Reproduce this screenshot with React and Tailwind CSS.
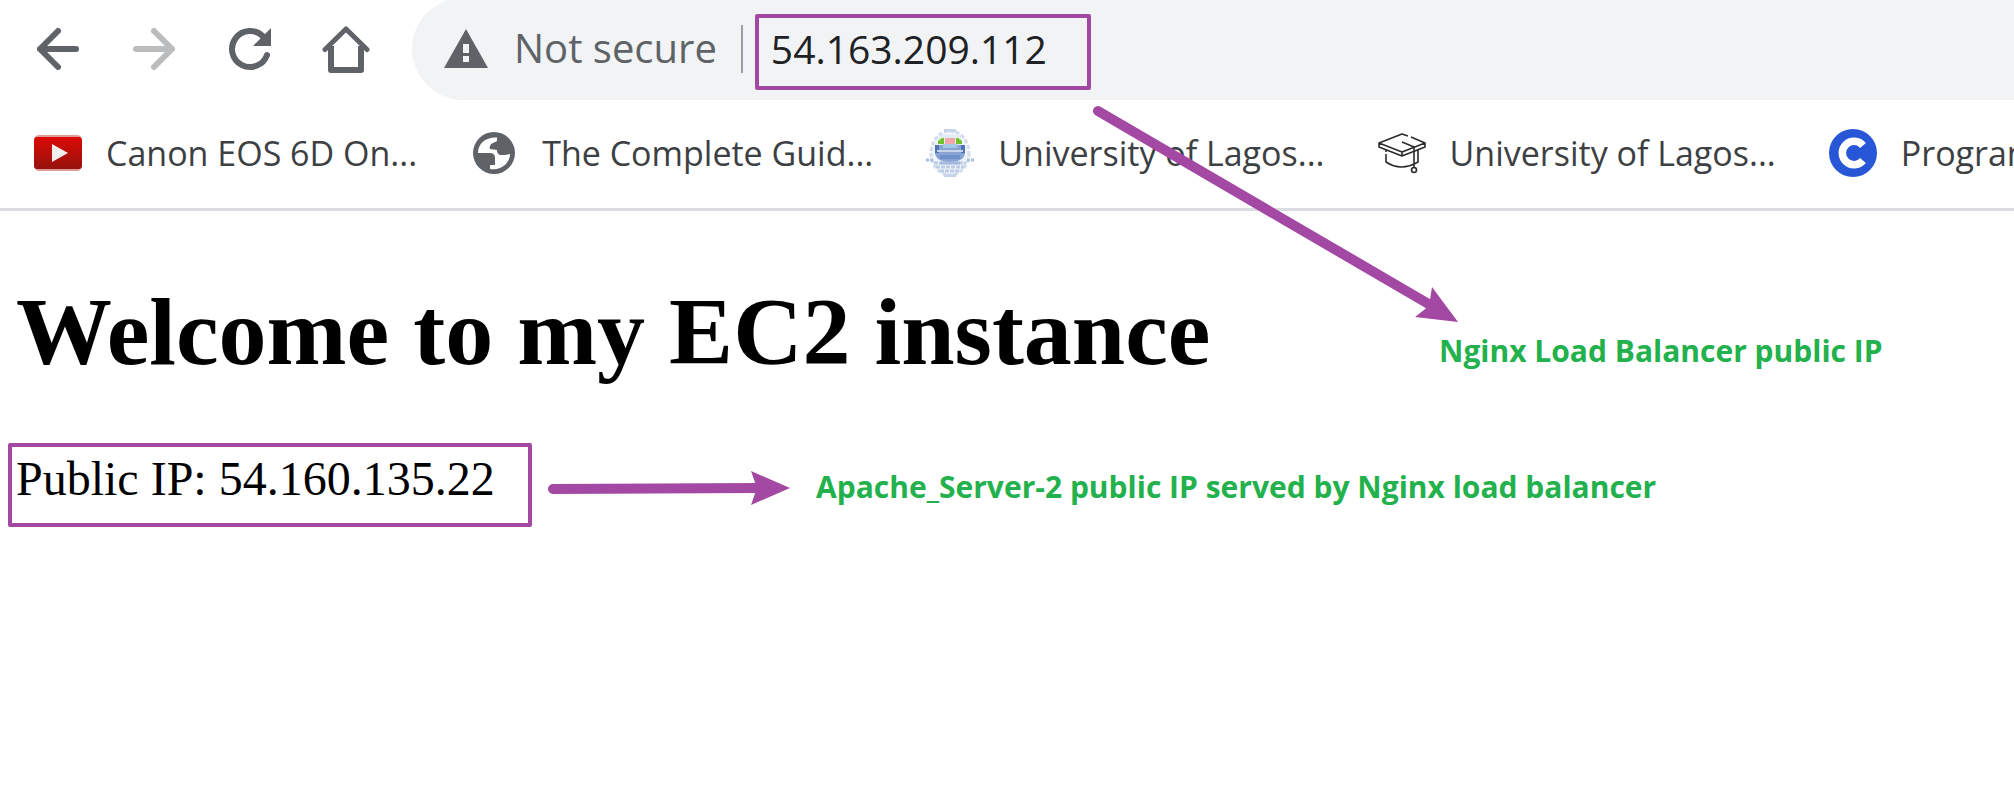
const purple = "#a349a4";

function IconButton({ label, disabled, children }) {
  return (
    <button
      type="button"
      aria-label={label}
      disabled={disabled}
      className="flex size-12 shrink-0 items-center justify-center"
    >
      <svg viewBox="0 0 48 48" className="size-12" aria-hidden="true">
        {children}
      </svg>
    </button>
  );
}

function Bookmark({ label, children }) {
  return (
    <a href="#" className="flex shrink-0 items-center gap-6 text-[#3c4043]">
      <svg viewBox="0 0 48 48" className="size-12 shrink-0" aria-hidden="true">
        {children}
      </svg>
      <span className="whitespace-nowrap">{label}</span>
    </a>
  );
}

function CrestIcon() {
  return (
    <>
      <ellipse cx="24" cy="24" rx="19" ry="22" fill="#f1f5fb" />
      <ellipse cx="24" cy="24" rx="19" ry="22" fill="none" stroke="#d3ddee" strokeWidth="3" strokeDasharray="4 2" />
      <path d="M0 31h7M41 31h7" stroke="#a9bfe0" strokeWidth="3" strokeDasharray="3 1" />
      <path d="M8 34h32M10 38h28M14 42h20" stroke="#bccbe6" strokeWidth="3" strokeDasharray="4 1" />
      <path d="M18 0h12v3H18zM18 45h12v3H18z" fill="#c6d3ea" />
      <path d="M12 10l4-4h16l4 4v6H12z" fill="#e2ecf3" />
      <path d="M12 15v-3l4-3h2v6zM36 15v-3l-4-3h-2v6z" fill="#6fc42c" />
      <path d="M19 9h10v6H19z" fill="#f4a7a9" />
      <path d="M9 16h30v9q-2 8-15 8T9 25z" fill="#89a4d2" />
      <path d="M9 16h4v8H9zM35 16h4v8h-4z" fill="#4f74b6" />
      <path d="M17 15h14v4H17z" fill="#a3c9e6" />
      <path d="M11 22h26" stroke="#c6d4ea" strokeWidth="2" />
      <path d="M14 28h20" stroke="#6f90c8" strokeWidth="4" />
      <path d="M14 34h20" stroke="#a4b9de" strokeWidth="3" />
    </>
  );
}

export default function App() {
  return (
    <div className="relative min-h-screen overflow-hidden bg-white font-['Open_Sans','Noto_Sans',sans-serif]">
      <header className="border-b-3 border-[#dadce0]">
        <div className="-mt-0.5 flex h-25.5 items-center">
          <nav aria-label="Navigation" className="flex shrink-0 items-center gap-12 pr-10.5 pl-8.5">
            <IconButton label="Back">
              <path d="M42 24H6M24 6L6 24l18 18" fill="none" stroke="#5f6368" strokeWidth="6" strokeLinecap="round" strokeLinejoin="round" />
            </IconButton>
            <IconButton label="Forward" disabled>
              <path d="M6 24h36M24 6l18 18-18 18" fill="none" stroke="#babcbe" strokeWidth="6" strokeLinecap="round" strokeLinejoin="round" />
            </IconButton>
            <IconButton label="Reload">
              <path d="M41 30A18 18 0 1 1 37 11.500" fill="none" stroke="#5f6368" strokeWidth="6" strokeLinecap="round" />
              <path d="M45 3v18H27z" fill="#5f6368" />
            </IconButton>
            <IconButton label="Home">
              <path d="M3 24.500L24 4l21 20.500" fill="none" stroke="#5f6368" strokeWidth="5" strokeLinecap="round" strokeLinejoin="round" />
              <path d="M9 21v24h30V21" fill="none" stroke="#5f6368" strokeWidth="6" strokeLinejoin="round" />
            </IconButton>
          </nav>
          <div className="flex h-25.5 min-w-0 flex-1 items-center rounded-l-full bg-[#f1f3f4] pl-8">
            <svg viewBox="0 0 44 40" className="h-10 w-11 shrink-0" aria-hidden="true">
              <path d="M22 0l22 39H0z" fill="#5f6368" />
              <path d="M19 15h6v9h-6zM19 27h6v6h-6z" fill="#f1f3f4" />
            </svg>
            <span className="ml-6.5 pb-0.5 text-[40px] whitespace-nowrap text-[#5f6368]">Not secure</span>
            <span className="ml-6 h-12 w-0.5 shrink-0 bg-[#9aa0a6]" />
            <input
              type="text"
              aria-label="Address"
              defaultValue="54.163.209.112"
              className="mt-1.5 ml-3 h-19 w-84 rounded-xs border-4 border-[#a349a4] bg-transparent pb-2 pl-3 text-[39px] text-[#202124] outline-none"
            />
          </div>
        </div>
        <nav aria-label="Bookmarks" className="flex h-27 items-center gap-[53px] overflow-hidden pb-0.5 pl-8.5 text-[34px]">
          <Bookmark label="Canon EOS 6D On...">
            <defs>
              <linearGradient id="play-red" x1="0" y1="0" x2="0" y2="1">
                <stop offset="0" stopColor="#dc0a06" />
                <stop offset="1" stopColor="#96120c" />
              </linearGradient>
            </defs>
            <rect x="1" y="6" width="46" height="36" rx="4" fill="#e09a96" />
            <rect y="8" width="48" height="32" rx="3" fill="url(#play-red)" />
            <path d="M18 15l16 9-16 9z" fill="#f1eeee" />
          </Bookmark>
          <Bookmark label="The Complete Guid...">
            <circle cx="24" cy="24" r="21" fill="#5f6368" />
            <path d="M8 24C8 15 15 8 27 8.500V12L21 15q-2 4-1 5l7 1q0 4 3 5h5l5-1c0 9-9 17-20 15v-4h5v-7q0-5-5-5z" fill="#fff" />
          </Bookmark>
          <Bookmark label="University of Lagos...">
            <CrestIcon />
          </Bookmark>
          <Bookmark label="University of Lagos...">
            <g fill="none" stroke="#2b2b2b" strokeWidth="1.600" strokeLinejoin="round">
              <path d="M30 7l-6-2L1 14l23 9 23-9-14-6M1 14v4l23 9 23-9v-4M24 23v4" />
              <path d="M8 21v2M8 25v8q15 10 32 0V21M24 13l12 5v20" />
              <circle cx="36" cy="41" r="2.500" />
            </g>
          </Bookmark>
          <Bookmark label="Programming">
            <circle cx="24" cy="24" r="24" fill="#2757d6" />
            <path d="M34 16.500A11.700 11.700 0 1 0 34 31.500" fill="none" stroke="#fff" strokeWidth="7.500" />
          </Bookmark>
        </nav>
      </header>

      <main className="px-4 pt-16.5 font-['Liberation_Serif',serif] text-black">
        <h1 className="text-[96px] leading-[110px] font-bold">Welcome to my EC2 instance</h1>
        <div className="mt-14 -ml-2 flex items-center">
          <p className="h-21 w-131 shrink-0 rounded-xs border-4 border-[#a349a4] pl-1 text-[48px] leading-[64px] whitespace-nowrap">
            Public IP: 54.160.135.22
          </p>
          <svg viewBox="0 0 244 36" className="mt-1.5 ml-4 h-9 w-61 shrink-0" aria-hidden="true">
            <path d="M5 19L211 18" stroke={purple} strokeWidth="10" strokeLinecap="round" />
            <path d="M203 1l39 17-39 17 6-17z" fill={purple} />
          </svg>
          <p className="mt-0.5 ml-6 font-['Open_Sans','Noto_Sans',sans-serif] text-[30px] font-bold whitespace-nowrap text-[#22b14c]">
            Apache_Server-2 public IP served by Nginx load balancer
          </p>
        </div>
      </main>

      <svg viewBox="0 0 370 222" className="pointer-events-none absolute top-[104px] left-[1090px] h-[222px] w-[370px]" aria-hidden="true">
        <path d="M8 7L342 202" stroke={purple} strokeWidth="10" strokeLinecap="round" />
        <path d="M342 183l26 35-43-5 14-11z" fill={purple} />
      </svg>
      <p className="absolute top-[328px] left-[1439px] text-[30px] font-bold whitespace-nowrap text-[#22b14c]">
        Nginx Load Balancer public IP
      </p>
    </div>
  );
}
